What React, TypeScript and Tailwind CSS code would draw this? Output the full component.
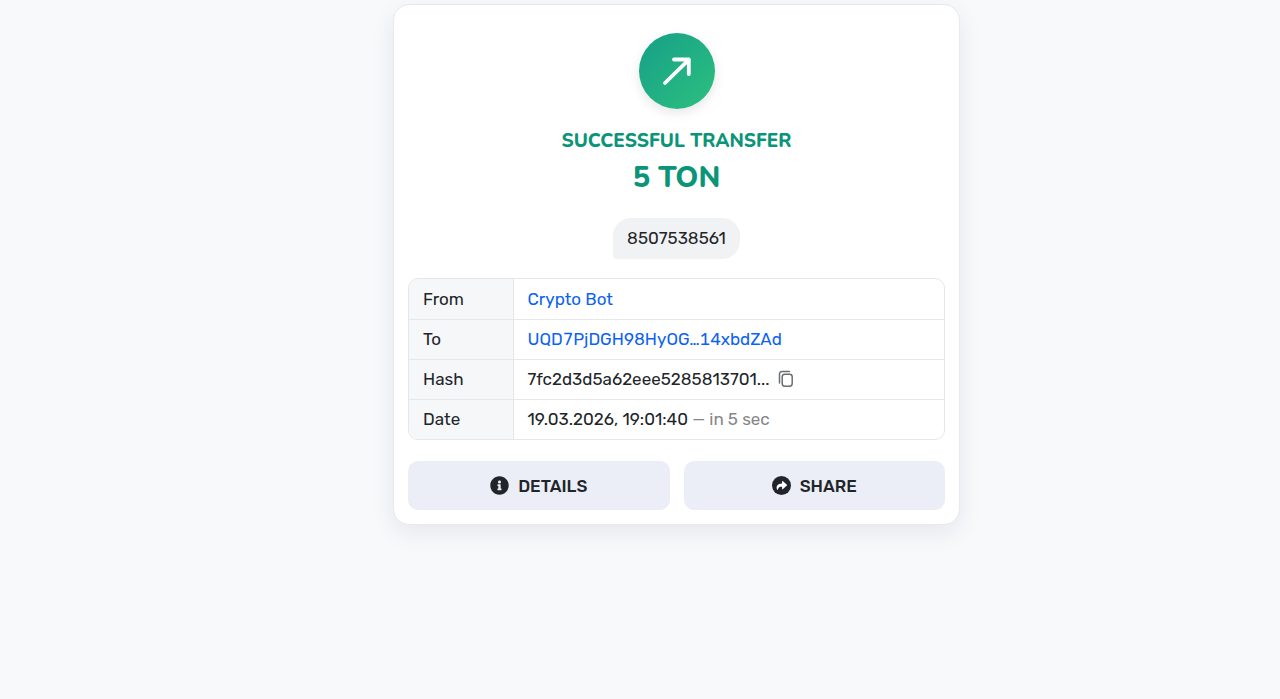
import type { ReactNode } from "react"
import { FaInfoCircle } from "react-icons/fa"

const ArrowIcon = () => (
    <svg viewBox="0 0 30 30" className="w-[30px] h-[30px]" fill="none" stroke="white" strokeWidth="3.8" strokeLinecap="round" strokeLinejoin="round" aria-hidden="true">
        <path d="M3 27 26.6 3.8" />
        <path d="M12 3.5H26.8V18" />
    </svg>
)

const CopyIcon = () => (
    <svg viewBox="0 0 16 18" className="w-4 h-[18px]" fill="none" stroke="currentColor" strokeWidth="1.5" strokeLinecap="round" aria-hidden="true">
        <rect x="4.2" y="4.2" width="10" height="12" rx="2.6" />
        <path d="M1.5 13V4A2.5 2.5 0 0 1 4 1.5h7.5" />
    </svg>
)

const ShareIcon = () => (
    <svg viewBox="0 0 20 20" className="w-[19px] h-[19px]" aria-hidden="true">
        <circle cx="10" cy="10" r="10" fill="currentColor" />
        <path d="M10.6 5.9c0-.6.6-.8 1-.5l4.1 3.7c.3.3.3.7 0 1l-4.1 3.7c-.4.4-1 .1-1-.5v-2c-2.6 0-4 .6-4.3 2.9-.1.6-.6.6-.9.1-1.6-3.2.2-6.4 5.2-6.5z" fill="white" />
    </svg>
)

const Row = ({ label, children }: { label: string; children: ReactNode }) => (
    <tr className="h-10 border-b border-[#e6e7e9] last:border-b-0">
        <th scope="row" className="w-[104px] px-[14px] text-left font-normal bg-[#f6f7f9] border-r border-[#e6e7e9]">{label}</th>
        <td className="px-[14px]">{children}</td>
    </tr>
)

export default function App() {
    return (
        <main className="min-h-screen flex justify-center items-start pt-1 pl-[73px] bg-[#f8f9fb] font-['Rubik','Roboto',sans-serif] text-[17px] leading-6 text-[#212529]">
            <section className="w-full max-w-[567px] flex flex-col items-center px-[14px] pt-7 pb-[14px] rounded-2xl bg-white border border-[#e8e9ee] shadow-[0_8px_24px_rgba(30,30,60,0.08)]">
                <div className="flex items-center justify-center w-19 h-19 rounded-full bg-linear-to-br from-[#169f87] to-[#2cc07f] shadow-[0_4px_12px_rgba(0,0,0,0.1)]">
                    <ArrowIcon />
                </div>
                <h1 className="mt-4 flex flex-col items-center text-[#0a9478] font-['Nunito','Open_Sans',sans-serif] font-extrabold">
                    <span className="text-[19px] leading-8">SUCCESSFUL TRANSFER</span>
                    <span className="text-[29px] leading-[42px]">5 TON</span>
                </h1>
                <p className="mt-[19px] px-[14px] pt-2 pb-[9px] rounded-[18px] rounded-bl-sm bg-[#f1f2f4]">8507538561</p>
                <div className="mt-[19px] w-full overflow-hidden rounded-[10px] border border-[#e6e7e9]">
                    <table className="w-full border-collapse">
                        <tbody>
                            <Row label="From">
                                <a href="#from" className="text-[#0d63f0]">Crypto Bot</a>
                            </Row>
                            <Row label="To">
                                <a href="#to" className="text-[#0d63f0] tabular-nums">UQD7PjDGH98HyOG…14xbdZAd</a>
                            </Row>
                            <Row label="Hash">
                                <div className="flex items-center gap-2">
                                    <span>7fc2d3d5a62eee5285813701...</span>
                                    <button type="button" aria-label="Copy hash" className="text-[#6b6d70] cursor-pointer">
                                        <CopyIcon />
                                    </button>
                                </div>
                            </Row>
                            <Row label="Date">
                                19.03.2026, 19:01:40 <span className="text-[#858688]">— in 5 sec</span>
                            </Row>
                        </tbody>
                    </table>
                </div>
                <div className="mt-[21px] w-full grid grid-cols-2 gap-[14px] font-medium">
                    <button type="button" className="flex items-center justify-center gap-[9px] h-[49px] rounded-[10px] bg-[#ebeef6] cursor-pointer">
                        <FaInfoCircle className="w-[19px] h-[19px]" />
                        DETAILS
                    </button>
                    <button type="button" className="flex items-center justify-center gap-[9px] h-[49px] rounded-[10px] bg-[#ebeef6] cursor-pointer">
                        <ShareIcon />
                        SHARE
                    </button>
                </div>
            </section>
        </main>
    )
}
